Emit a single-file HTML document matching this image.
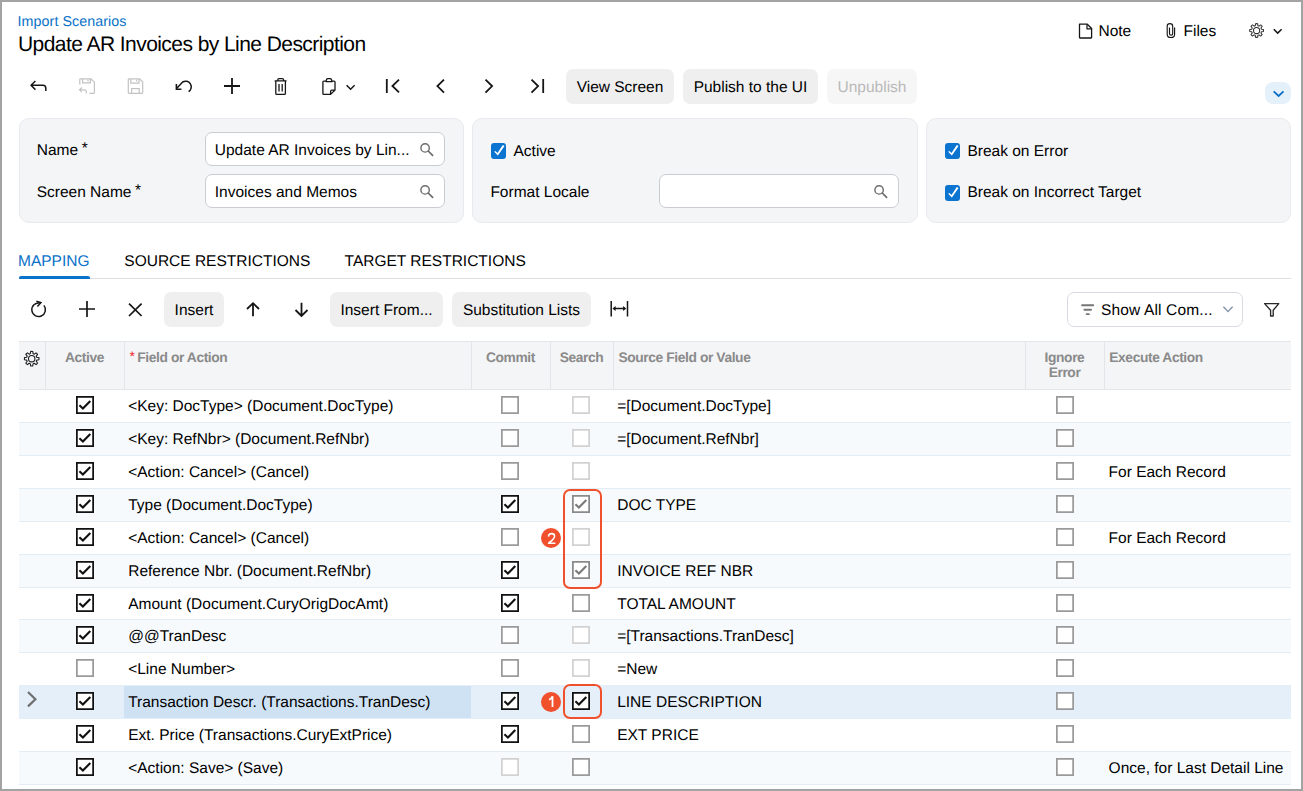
<!DOCTYPE html>
<html><head><meta charset="utf-8"><title>Import Scenarios</title>
<style>
html,body{margin:0;padding:0;width:1303px;height:791px;overflow:hidden;background:#fff}
body{position:relative;font-family:"Liberation Sans", sans-serif}
.t{position:absolute;white-space:pre;font-family:"Liberation Sans", sans-serif;text-rendering:geometricPrecision}
svg{overflow:visible}
#frame{position:absolute;left:0;top:0;width:1303px;height:791px;box-sizing:border-box;border:2px solid #a3a3a3;pointer-events:none}
</style></head><body>
<div class="t" style="left:17.6px;top:14.90px;font-size:14.3px;line-height:14.3px;color:#0a72c8;font-weight:normal;letter-spacing:0.05px;">Import Scenarios</div>
<div class="t" style="left:18px;top:34.02px;font-size:21px;line-height:21px;color:#000;font-weight:normal;letter-spacing:-0.56px;">Update AR Invoices by Line Description</div>
<svg style="position:absolute;left:1070px;top:15px;" width="220" height="30" viewBox="1070 15 220 30" fill="none"><path d="M1079.5,24.2 H1087.3 L1091.6,28.5 V37.5 Q1091.6,38 1091.1,38 H1080 Q1079.5,38 1079.5,37.5 Z" stroke="#161616" stroke-width="1.3" stroke-linejoin="round"/><path d="M1087,24.4 V28.9 H1091.4" stroke="#161616" stroke-width="1.2"/><path d="M1169.5,27.6 V33.5 Q1169.5,35.2 1171.1,35.2 Q1172.7,35.2 1172.7,33.5 V26.3 Q1172.7,23.6 1169.9,23.6 Q1167.2,23.6 1167.2,26.3 V34.2 Q1167.2,37.5 1170.9,37.5 Q1174.6,37.5 1174.6,34.2 V27.6" stroke="#161616" stroke-width="1.15"/><path d="M1273.8,29.2 L1277.7,33.1 L1281.6,29.2" stroke="#161616" stroke-width="1.5"/></svg>
<div class="t" style="left:1098.5px;top:23.98px;font-size:15.5px;line-height:15.5px;color:#000;font-weight:normal;letter-spacing:0.0px;">Note</div>
<div class="t" style="left:1183.5px;top:23.98px;font-size:15.5px;line-height:15.5px;color:#000;font-weight:normal;letter-spacing:0.0px;">Files</div>
<svg style="position:absolute;left:1245px;top:18px;" width="25" height="25" viewBox="1245 18 25 25" fill="none"><path d="M1255.27,25.68 L1255.57,23.68 A6.9,6.9 0 0 1 1257.63,23.68 L1257.93,25.68 A5.0,5.0 0 0 1 1259.06,26.15 L1260.70,24.95 A6.9,6.9 0 0 1 1262.15,26.40 L1260.95,28.04 A5.0,5.0 0 0 1 1261.42,29.17 L1263.42,29.47 A6.9,6.9 0 0 1 1263.42,31.53 L1261.42,31.83 A5.0,5.0 0 0 1 1260.95,32.96 L1262.15,34.60 A6.9,6.9 0 0 1 1260.70,36.05 L1259.06,34.85 A5.0,5.0 0 0 1 1257.93,35.32 L1257.63,37.32 A6.9,6.9 0 0 1 1255.57,37.32 L1255.27,35.32 A5.0,5.0 0 0 1 1254.14,34.85 L1252.50,36.05 A6.9,6.9 0 0 1 1251.05,34.60 L1252.25,32.96 A5.0,5.0 0 0 1 1251.78,31.83 L1249.78,31.53 A6.9,6.9 0 0 1 1249.78,29.47 L1251.78,29.17 A5.0,5.0 0 0 1 1252.25,28.04 L1251.05,26.40 A6.9,6.9 0 0 1 1252.50,24.95 L1254.14,26.15 A5.0,5.0 0 0 1 1255.27,25.68 Z" stroke="#303030" stroke-width="1.05" stroke-linejoin="round"/><circle cx="1256.6" cy="30.5" r="3.1" stroke="#303030" stroke-width="1.05"/></svg>
<svg style="position:absolute;left:20px;top:70px;" width="540" height="32" viewBox="20 70 540 32" fill="none"><path d="M45.8,91 V88.2 Q45.8,85.3 43,85.3 H31.2 M35.4,81 L31,85.3 L35.4,89.6" stroke="#161616" stroke-width="1.5" stroke-linejoin="round"/><path d="M79.8,84.6 V79.6 Q79.8,78.9 80.5,78.9 H91 L94.4,82.3 V92.6 Q94.4,93.3 93.7,93.3 H89.4" stroke="#c3c3c3" stroke-width="1.2"/><path d="M82.6,79 V82.8 H90.4 V79 M88,79.4 V81.4" stroke="#c3c3c3" stroke-width="1.2"/><path d="M86.2,93.6 V91.6 Q86.2,89.8 84.4,89.8 H79.6 M81.8,87.5 L79.5,89.8 L81.8,92.1" stroke="#c3c3c3" stroke-width="1.2"/><path d="M128.3,79.6 Q128.3,78.9 129,78.9 H139.6 L142.7,82 V92.6 Q142.7,93.3 142,93.3 H129 Q128.3,93.3 128.3,92.6 Z" stroke="#c3c3c3" stroke-width="1.2"/><path d="M130.8,79 V83.2 H139 V79 M136.6,79.4 V81.4 M131.6,93.2 V88.6 H139.2 V93.2" stroke="#c3c3c3" stroke-width="1.2"/><path d="M188.6,91.6 A5.6,5.6 0 1 0 182.6,82 L176.6,88.6" stroke="#161616" stroke-width="1.5"/><path d="M176.4,84 V89.2 H181.4" stroke="#161616" stroke-width="1.6"/><path d="M232,78 V94 M224,86 H240" stroke="#161616" stroke-width="1.8"/><path d="M274.6,80.9 H286.6 M277.8,80.9 V79.8 Q277.8,78.6 279,78.6 H282.4 Q283.6,78.6 283.6,79.8 V80.9 M275.8,81 V93.4 Q275.8,94.4 276.8,94.4 H284.4 Q285.4,94.4 285.4,93.4 V81 M279,84 V91.5 M282.2,84 V91.5" stroke="#161616" stroke-width="1.3"/><path d="M326,81.1 H323.8 Q322.9,81.1 322.9,82 V93.5 Q322.9,94.4 323.8,94.4 H330.6 L335,90 V82 Q335,81.1 334.1,81.1 H332 M326,81.6 L326.6,79.4 Q326.9,78.6 327.8,78.6 H330.2 Q331.1,78.6 331.4,79.4 L332,81.6 Z M330.6,94.2 V91.4 Q330.6,90.2 331.8,90.2 H334.8" stroke="#161616" stroke-width="1.3" stroke-linejoin="round"/><path d="M346.6,85.2 L350.6,89.2 L354.6,85.2" stroke="#161616" stroke-width="1.5"/><path d="M386.8,79 V93 M399,79.6 L392.4,86 L399,92.4" stroke="#161616" stroke-width="1.8"/><path d="M444,79.6 L437.4,86.1 L444,92.6" stroke="#161616" stroke-width="1.8"/><path d="M485.5,79.6 L492.1,86.1 L485.5,92.6" stroke="#161616" stroke-width="1.8"/><path d="M531.5,79.6 L538.1,86.1 L531.5,92.6 M543.2,79 V93" stroke="#161616" stroke-width="1.8"/></svg>
<div style="position:absolute;left:566px;top:69px;width:108px;height:35px;background:#efefef;border-radius:7px"></div><div class="t" style="left:566px;top:69px;width:108px;height:35px;line-height:37px;text-align:center;font-size:15.5px;color:#000;letter-spacing:0px">View Screen</div>
<div style="position:absolute;left:683px;top:69px;width:135px;height:35px;background:#efefef;border-radius:7px"></div><div class="t" style="left:683px;top:69px;width:135px;height:35px;line-height:37px;text-align:center;font-size:15.5px;color:#000;letter-spacing:0px">Publish to the UI</div>
<div style="position:absolute;left:827px;top:69px;width:90px;height:35px;background:#f6f6f6;border-radius:7px"></div><div class="t" style="left:827px;top:69px;width:90px;height:35px;line-height:37px;text-align:center;font-size:15.5px;color:#b9b9b9;letter-spacing:0px">Unpublish</div>
<div style="position:absolute;left:1265px;top:82px;width:26px;height:22px;background:#e4f0fa;border-radius:8px"></div>
<svg style="position:absolute;left:1270px;top:86px;" width="16" height="14" viewBox="1270 86 16 14" fill="none"><path d="M1273.7,91.4 L1278.6,96 L1283.5,91.4" stroke="#0a6fc6" stroke-width="1.8"/></svg>
<div style="position:absolute;left:19px;top:118px;width:445px;height:105px;background:#f4f5f7;border:1px solid #e9eaed;border-radius:10px;box-sizing:border-box"></div>
<div style="position:absolute;left:472px;top:118px;width:446px;height:105px;background:#f4f5f7;border:1px solid #e9eaed;border-radius:10px;box-sizing:border-box"></div>
<div style="position:absolute;left:926px;top:118px;width:365px;height:105px;background:#f4f5f7;border:1px solid #e9eaed;border-radius:10px;box-sizing:border-box"></div>
<div class="t" style="left:36.7px;top:142.88px;font-size:15.5px;line-height:15.5px;color:#000;font-weight:normal;letter-spacing:0.0px;">Name</div>
<div class="t" style="left:81.8px;top:141.38px;font-size:15.5px;line-height:15.5px;color:#000;font-weight:normal;letter-spacing:0.0px;">*</div>
<div class="t" style="left:36.7px;top:184.88px;font-size:15.5px;line-height:15.5px;color:#000;font-weight:normal;letter-spacing:0.0px;">Screen Name</div>
<div class="t" style="left:135.1px;top:183.38px;font-size:15.5px;line-height:15.5px;color:#000;font-weight:normal;letter-spacing:0.0px;">*</div>
<div style="position:absolute;left:205px;top:132px;width:240px;height:34px;background:#fff;border:1px solid #c9ccd1;border-radius:7px;box-sizing:border-box"></div><div class="t" style="left:214.8px;top:142.88px;font-size:15.5px;line-height:15.5px;color:#000;font-weight:normal;letter-spacing:0.0px;">Update AR Invoices by Lin...</div><svg style="position:absolute;left:417px;top:138px;" width="22" height="22" viewBox="417 138 22 22" fill="none"><circle cx="425.09999999999997" cy="147.9" r="4.2" stroke="#6b6b6b" stroke-width="1.4"/><path d="M428.2,151.0 L432.59999999999997,155.4" stroke="#6b6b6b" stroke-width="1.7" stroke-linecap="round"/></svg>
<div style="position:absolute;left:205px;top:174px;width:240px;height:34px;background:#fff;border:1px solid #c9ccd1;border-radius:7px;box-sizing:border-box"></div><div class="t" style="left:214.8px;top:184.88px;font-size:15.5px;line-height:15.5px;color:#000;font-weight:normal;letter-spacing:0.0px;">Invoices and Memos</div><svg style="position:absolute;left:417px;top:180px;" width="22" height="22" viewBox="417 180 22 22" fill="none"><circle cx="425.09999999999997" cy="189.9" r="4.2" stroke="#6b6b6b" stroke-width="1.4"/><path d="M428.2,193.0 L432.59999999999997,197.4" stroke="#6b6b6b" stroke-width="1.7" stroke-linecap="round"/></svg>
<div style="position:absolute;left:491px;top:143px;width:15px;height:16px;background:#0b74d1;border-radius:3px"></div><svg style="position:absolute;left:491px;top:143px;" width="15" height="16" viewBox="491 143 15 16" fill="none"><path d="M494.2,151.7 L495.3,150.9 L497.5,153.1 L502.8,145.1 L504.5,146.1 L497.9,155.6 Z" fill="#fff"/></svg>
<div class="t" style="left:513.5px;top:143.68px;font-size:15.5px;line-height:15.5px;color:#000;font-weight:normal;letter-spacing:0.0px;">Active</div>
<div class="t" style="left:490.4px;top:184.68px;font-size:15.5px;line-height:15.5px;color:#000;font-weight:normal;letter-spacing:0.0px;">Format Locale</div>
<div style="position:absolute;left:659px;top:174px;width:240px;height:34px;background:#fff;border:1px solid #c9ccd1;border-radius:7px;box-sizing:border-box"></div><svg style="position:absolute;left:871px;top:180px;" width="22" height="22" viewBox="871 180 22 22" fill="none"><circle cx="879.1" cy="189.9" r="4.2" stroke="#6b6b6b" stroke-width="1.4"/><path d="M882.2,193.0 L886.6,197.4" stroke="#6b6b6b" stroke-width="1.7" stroke-linecap="round"/></svg>
<div style="position:absolute;left:945px;top:143px;width:15px;height:16px;background:#0b74d1;border-radius:3px"></div><svg style="position:absolute;left:945px;top:143px;" width="15" height="16" viewBox="945 143 15 16" fill="none"><path d="M948.2,151.7 L949.3,150.9 L951.5,153.1 L956.8,145.1 L958.5,146.1 L951.9,155.6 Z" fill="#fff"/></svg>
<div class="t" style="left:967.4px;top:143.68px;font-size:15.5px;line-height:15.5px;color:#000;font-weight:normal;letter-spacing:0.0px;">Break on Error</div>
<div style="position:absolute;left:945px;top:185px;width:15px;height:16px;background:#0b74d1;border-radius:3px"></div><svg style="position:absolute;left:945px;top:185px;" width="15" height="16" viewBox="945 185 15 16" fill="none"><path d="M948.2,193.7 L949.3,192.9 L951.5,195.1 L956.8,187.1 L958.5,188.1 L951.9,197.6 Z" fill="#fff"/></svg>
<div class="t" style="left:967.4px;top:185.48px;font-size:15.5px;line-height:15.5px;color:#000;font-weight:normal;letter-spacing:0.0px;">Break on Incorrect Target</div>
<div style="position:absolute;left:19px;top:278px;width:1272px;height:1px;background:#dedfe2"></div>
<div class="t" style="left:18px;top:253.88px;font-size:15.5px;line-height:15.5px;color:#0a72c8;font-weight:normal;letter-spacing:0.0px;">MAPPING</div>
<div style="position:absolute;left:19px;top:276px;width:71px;height:3px;background:#0a72c8;border-radius:2px 2px 0 0"></div>
<div class="t" style="left:124.3px;top:253.88px;font-size:15.5px;line-height:15.5px;color:#000;font-weight:normal;letter-spacing:0.0px;">SOURCE RESTRICTIONS</div>
<div class="t" style="left:344.6px;top:253.88px;font-size:15.5px;line-height:15.5px;color:#000;font-weight:normal;letter-spacing:0.0px;">TARGET RESTRICTIONS</div>
<svg style="position:absolute;left:20px;top:295px;" width="620" height="28" viewBox="20 295 620 28" fill="none"><path d="M43.9,305.4 A6.8,6.8 0 1 1 39.8,303" stroke="#161616" stroke-width="1.5"/><path d="M36.4,301.3 L40.9,302.7 L37.4,306.5" stroke="#161616" stroke-width="1.5" stroke-linejoin="miter"/><path d="M87,301 V317 M79,309 H95" stroke="#161616" stroke-width="1.7"/><path d="M129,303.6 L141.6,316 M141.6,303.6 L129,316" stroke="#161616" stroke-width="1.7"/><path d="M253,303.4 V316.2 M247,309 L253,303.2 L259,309" stroke="#161616" stroke-width="1.8"/><path d="M301.5,302.8 V315.8 M295.5,310 L301.5,316 L307.5,310" stroke="#161616" stroke-width="1.8"/><path d="M611.2,301 V316.6 M627.5,301 V316.6 M614,308.5 H624.6" stroke="#161616" stroke-width="1.5"/><path d="M612.4,308.5 L615.6,305.9 V311.1 Z M626.3,308.5 L623.1,305.9 V311.1 Z" fill="#161616"/></svg>
<div style="position:absolute;left:164px;top:292px;width:60px;height:35px;background:#efefef;border-radius:7px"></div><div class="t" style="left:164px;top:292px;width:60px;height:35px;line-height:37px;text-align:center;font-size:15.5px;color:#000;letter-spacing:0px">Insert</div>
<div style="position:absolute;left:330px;top:292px;width:113px;height:35px;background:#efefef;border-radius:7px"></div><div class="t" style="left:330px;top:292px;width:113px;height:35px;line-height:37px;text-align:center;font-size:15.5px;color:#000;letter-spacing:0px">Insert From...</div>
<div style="position:absolute;left:452px;top:292px;width:139px;height:35px;background:#efefef;border-radius:7px"></div><div class="t" style="left:452px;top:292px;width:139px;height:35px;line-height:37px;text-align:center;font-size:15.5px;color:#000;letter-spacing:0px">Substitution Lists</div>
<div style="position:absolute;left:1067px;top:292px;width:176px;height:35px;background:#fff;border:1px solid #d8dce2;border-radius:7px;box-sizing:border-box"></div>
<svg style="position:absolute;left:1075px;top:300px;" width="25" height="20" viewBox="1075 300 25 20" fill="none"><path d="M1082.1,305.2 H1093.2 M1084.4,309.8 H1091 M1086.7,314.1 H1088.9" stroke="#767676" stroke-width="1.9" stroke-linecap="round"/></svg>
<div class="t" style="left:1101px;top:302.68px;font-size:15.5px;line-height:15.5px;color:#000;font-weight:normal;letter-spacing:0.15px;">Show All Com...</div>
<svg style="position:absolute;left:1220px;top:302px;" width="16" height="14" viewBox="1220 302 16 14" fill="none"><path d="M1223.4,306.8 L1228,311.6 L1232.6,306.8" stroke="#7c8ea5" stroke-width="1.3"/></svg>
<svg style="position:absolute;left:1260px;top:300px;" width="24" height="20" viewBox="1260 300 24 20" fill="none"><path d="M1264.6,303.6 H1278.8 L1273.2,310.2 V316 H1270.6 V310.2 Z" stroke="#2a2a2a" stroke-width="1.35" stroke-linejoin="round"/></svg>
<div style="position:absolute;left:19px;top:341px;width:1272px;height:49px;background:#f4f5f7;border-top:1px solid #e3e5e8;border-bottom:1px solid #e3e5e8;box-sizing:border-box"></div>
<div style="position:absolute;left:45px;top:341px;width:1px;height:49px;background:#e3e5e8"></div>
<div style="position:absolute;left:124px;top:341px;width:1px;height:49px;background:#e3e5e8"></div>
<div style="position:absolute;left:471px;top:341px;width:1px;height:49px;background:#e3e5e8"></div>
<div style="position:absolute;left:550px;top:341px;width:1px;height:49px;background:#e3e5e8"></div>
<div style="position:absolute;left:613px;top:341px;width:1px;height:49px;background:#e3e5e8"></div>
<div style="position:absolute;left:1025px;top:341px;width:1px;height:49px;background:#e3e5e8"></div>
<div style="position:absolute;left:1104px;top:341px;width:1px;height:49px;background:#e3e5e8"></div>
<svg style="position:absolute;left:21px;top:349px;" width="22" height="20" viewBox="21 349 22 20" fill="none"><path d="M30.31,353.69 L30.61,351.48 A7.3,7.3 0 0 1 32.79,351.48 L33.09,353.69 A5.2,5.2 0 0 1 34.26,354.18 L36.03,352.82 A7.3,7.3 0 0 1 37.58,354.37 L36.22,356.14 A5.2,5.2 0 0 1 36.71,357.31 L38.92,357.61 A7.3,7.3 0 0 1 38.92,359.79 L36.71,360.09 A5.2,5.2 0 0 1 36.22,361.26 L37.58,363.03 A7.3,7.3 0 0 1 36.03,364.58 L34.26,363.22 A5.2,5.2 0 0 1 33.09,363.71 L32.79,365.92 A7.3,7.3 0 0 1 30.61,365.92 L30.31,363.71 A5.2,5.2 0 0 1 29.14,363.22 L27.37,364.58 A7.3,7.3 0 0 1 25.82,363.03 L27.18,361.26 A5.2,5.2 0 0 1 26.69,360.09 L24.48,359.79 A7.3,7.3 0 0 1 24.48,357.61 L26.69,357.31 A5.2,5.2 0 0 1 27.18,356.14 L25.82,354.37 A7.3,7.3 0 0 1 27.37,352.82 L29.14,354.18 A5.2,5.2 0 0 1 30.31,353.69 Z" stroke="#1e1e1e" stroke-width="1.1" stroke-linejoin="round"/><circle cx="31.7" cy="358.7" r="3.2" stroke="#1e1e1e" stroke-width="1.1"/></svg>
<div class="t" style="left:45px;width:79px;text-align:center;top:350.52px;font-size:13.8px;line-height:13.8px;color:#8a8a8a;font-weight:bold;letter-spacing:-0.4px">Active</div>
<div class="t" style="left:129.4px;top:348.95px;font-size:14px;line-height:14px;color:#f01818;font-weight:normal;letter-spacing:0px;">*</div>
<div class="t" style="left:137.3px;top:350.52px;font-size:13.8px;line-height:13.8px;color:#8a8a8a;font-weight:bold;letter-spacing:-0.4px;">Field or Action</div>
<div class="t" style="left:471px;width:79px;text-align:center;top:350.52px;font-size:13.8px;line-height:13.8px;color:#8a8a8a;font-weight:bold;letter-spacing:-0.4px">Commit</div>
<div class="t" style="left:550px;width:63px;text-align:center;top:350.52px;font-size:13.8px;line-height:13.8px;color:#8a8a8a;font-weight:bold;letter-spacing:-0.4px">Search</div>
<div class="t" style="left:618.5px;top:350.52px;font-size:13.8px;line-height:13.8px;color:#8a8a8a;font-weight:bold;letter-spacing:-0.4px;">Source Field or Value</div>
<div class="t" style="left:1025px;width:79px;text-align:center;top:350.72px;font-size:13.8px;line-height:13.8px;color:#8a8a8a;font-weight:bold;letter-spacing:-0.4px">Ignore</div>
<div class="t" style="left:1025px;width:79px;text-align:center;top:366.12px;font-size:13.8px;line-height:13.8px;color:#8a8a8a;font-weight:bold;letter-spacing:-0.4px">Error</div>
<div class="t" style="left:1109.3px;top:350.52px;font-size:13.8px;line-height:13.8px;color:#8a8a8a;font-weight:bold;letter-spacing:-0.4px;">Execute Action</div>
<div style="position:absolute;left:19px;top:422px;width:1272px;height:1px;background:#e3edf6"></div>
<svg style="position:absolute;left:76px;top:396px;" width="18" height="18" viewBox="76 396 18 18" fill="none"><rect x="76.875" y="396.875" width="16.25" height="16.25" fill="#fff" stroke="#111" stroke-width="1.75"/><path d="M79.4,405.3 L82.9,408.5 L90.3,401" stroke="#111" stroke-width="2.1"/></svg>
<svg style="position:absolute;left:501px;top:396px;" width="18" height="18" viewBox="501 396 18 18" fill="none"><rect x="501.875" y="396.875" width="16.25" height="16.25" fill="#fff" stroke="#9a9a9a" stroke-width="1.75"/></svg>
<svg style="position:absolute;left:572px;top:396px;" width="18" height="18" viewBox="572 396 18 18" fill="none"><rect x="572.875" y="396.875" width="16.25" height="16.25" fill="#fff" stroke="#d2d2d2" stroke-width="1.75"/></svg>
<svg style="position:absolute;left:1056px;top:396px;" width="18" height="18" viewBox="1056 396 18 18" fill="none"><rect x="1056.875" y="396.875" width="16.25" height="16.25" fill="#fff" stroke="#9a9a9a" stroke-width="1.75"/></svg>
<div class="t" style="left:128.2px;top:398.88px;font-size:15.5px;line-height:15.5px;color:#000;font-weight:normal;letter-spacing:0.0px;">&lt;Key: DocType&gt; (Document.DocType)</div>
<div class="t" style="left:617.2px;top:398.88px;font-size:15.5px;line-height:15.5px;color:#000;font-weight:normal;letter-spacing:0.0px;">=[Document.DocType]</div>
<div style="position:absolute;left:19px;top:423px;width:1272px;height:32px;background:#f7fafd"></div>
<div style="position:absolute;left:19px;top:455px;width:1272px;height:1px;background:#e3edf6"></div>
<svg style="position:absolute;left:76px;top:429px;" width="18" height="18" viewBox="76 429 18 18" fill="none"><rect x="76.875" y="429.875" width="16.25" height="16.25" fill="#fff" stroke="#111" stroke-width="1.75"/><path d="M79.4,438.3 L82.9,441.5 L90.3,434" stroke="#111" stroke-width="2.1"/></svg>
<svg style="position:absolute;left:501px;top:429px;" width="18" height="18" viewBox="501 429 18 18" fill="none"><rect x="501.875" y="429.875" width="16.25" height="16.25" fill="#fff" stroke="#9a9a9a" stroke-width="1.75"/></svg>
<svg style="position:absolute;left:572px;top:429px;" width="18" height="18" viewBox="572 429 18 18" fill="none"><rect x="572.875" y="429.875" width="16.25" height="16.25" fill="#fff" stroke="#d2d2d2" stroke-width="1.75"/></svg>
<svg style="position:absolute;left:1056px;top:429px;" width="18" height="18" viewBox="1056 429 18 18" fill="none"><rect x="1056.875" y="429.875" width="16.25" height="16.25" fill="#fff" stroke="#9a9a9a" stroke-width="1.75"/></svg>
<div class="t" style="left:128.2px;top:431.88px;font-size:15.5px;line-height:15.5px;color:#000;font-weight:normal;letter-spacing:0.0px;">&lt;Key: RefNbr&gt; (Document.RefNbr)</div>
<div class="t" style="left:617.2px;top:431.88px;font-size:15.5px;line-height:15.5px;color:#000;font-weight:normal;letter-spacing:0.0px;">=[Document.RefNbr]</div>
<div style="position:absolute;left:19px;top:488px;width:1272px;height:1px;background:#e3edf6"></div>
<svg style="position:absolute;left:76px;top:462px;" width="18" height="18" viewBox="76 462 18 18" fill="none"><rect x="76.875" y="462.875" width="16.25" height="16.25" fill="#fff" stroke="#111" stroke-width="1.75"/><path d="M79.4,471.3 L82.9,474.5 L90.3,467" stroke="#111" stroke-width="2.1"/></svg>
<svg style="position:absolute;left:501px;top:462px;" width="18" height="18" viewBox="501 462 18 18" fill="none"><rect x="501.875" y="462.875" width="16.25" height="16.25" fill="#fff" stroke="#9a9a9a" stroke-width="1.75"/></svg>
<svg style="position:absolute;left:572px;top:462px;" width="18" height="18" viewBox="572 462 18 18" fill="none"><rect x="572.875" y="462.875" width="16.25" height="16.25" fill="#fff" stroke="#d2d2d2" stroke-width="1.75"/></svg>
<svg style="position:absolute;left:1056px;top:462px;" width="18" height="18" viewBox="1056 462 18 18" fill="none"><rect x="1056.875" y="462.875" width="16.25" height="16.25" fill="#fff" stroke="#9a9a9a" stroke-width="1.75"/></svg>
<div class="t" style="left:128.2px;top:464.88px;font-size:15.5px;line-height:15.5px;color:#000;font-weight:normal;letter-spacing:0.0px;">&lt;Action: Cancel&gt; (Cancel)</div>
<div class="t" style="left:1108.6px;top:464.88px;font-size:15.5px;line-height:15.5px;color:#000;font-weight:normal;letter-spacing:0.0px;">For Each Record</div>
<div style="position:absolute;left:19px;top:489px;width:1272px;height:32px;background:#f7fafd"></div>
<div style="position:absolute;left:19px;top:521px;width:1272px;height:1px;background:#e3edf6"></div>
<svg style="position:absolute;left:76px;top:495px;" width="18" height="18" viewBox="76 495 18 18" fill="none"><rect x="76.875" y="495.875" width="16.25" height="16.25" fill="#fff" stroke="#111" stroke-width="1.75"/><path d="M79.4,504.3 L82.9,507.5 L90.3,500" stroke="#111" stroke-width="2.1"/></svg>
<svg style="position:absolute;left:501px;top:495px;" width="18" height="18" viewBox="501 495 18 18" fill="none"><rect x="501.875" y="495.875" width="16.25" height="16.25" fill="#fff" stroke="#111" stroke-width="1.75"/><path d="M504.4,504.3 L507.9,507.5 L515.3,500" stroke="#111" stroke-width="2.1"/></svg>
<svg style="position:absolute;left:572px;top:495px;" width="18" height="18" viewBox="572 495 18 18" fill="none"><rect x="572.875" y="495.875" width="16.25" height="16.25" fill="#fff" stroke="#8a8a8a" stroke-width="1.75"/><path d="M575.4,504.3 L578.9,507.5 L586.3,500" stroke="#7a7a7a" stroke-width="2.1"/></svg>
<svg style="position:absolute;left:1056px;top:495px;" width="18" height="18" viewBox="1056 495 18 18" fill="none"><rect x="1056.875" y="495.875" width="16.25" height="16.25" fill="#fff" stroke="#9a9a9a" stroke-width="1.75"/></svg>
<div class="t" style="left:128.2px;top:497.88px;font-size:15.5px;line-height:15.5px;color:#000;font-weight:normal;letter-spacing:0.0px;">Type (Document.DocType)</div>
<div class="t" style="left:617.2px;top:497.88px;font-size:15.5px;line-height:15.5px;color:#000;font-weight:normal;letter-spacing:0.0px;">DOC TYPE</div>
<div style="position:absolute;left:19px;top:554px;width:1272px;height:1px;background:#e3edf6"></div>
<svg style="position:absolute;left:76px;top:528px;" width="18" height="18" viewBox="76 528 18 18" fill="none"><rect x="76.875" y="528.875" width="16.25" height="16.25" fill="#fff" stroke="#111" stroke-width="1.75"/><path d="M79.4,537.3 L82.9,540.5 L90.3,533" stroke="#111" stroke-width="2.1"/></svg>
<svg style="position:absolute;left:501px;top:528px;" width="18" height="18" viewBox="501 528 18 18" fill="none"><rect x="501.875" y="528.875" width="16.25" height="16.25" fill="#fff" stroke="#9a9a9a" stroke-width="1.75"/></svg>
<svg style="position:absolute;left:572px;top:528px;" width="18" height="18" viewBox="572 528 18 18" fill="none"><rect x="572.875" y="528.875" width="16.25" height="16.25" fill="#fff" stroke="#d2d2d2" stroke-width="1.75"/></svg>
<svg style="position:absolute;left:1056px;top:528px;" width="18" height="18" viewBox="1056 528 18 18" fill="none"><rect x="1056.875" y="528.875" width="16.25" height="16.25" fill="#fff" stroke="#9a9a9a" stroke-width="1.75"/></svg>
<div class="t" style="left:128.2px;top:530.88px;font-size:15.5px;line-height:15.5px;color:#000;font-weight:normal;letter-spacing:0.0px;">&lt;Action: Cancel&gt; (Cancel)</div>
<div class="t" style="left:1108.6px;top:530.88px;font-size:15.5px;line-height:15.5px;color:#000;font-weight:normal;letter-spacing:0.0px;">For Each Record</div>
<div style="position:absolute;left:19px;top:555px;width:1272px;height:32px;background:#f7fafd"></div>
<div style="position:absolute;left:19px;top:587px;width:1272px;height:1px;background:#e3edf6"></div>
<svg style="position:absolute;left:76px;top:561px;" width="18" height="18" viewBox="76 561 18 18" fill="none"><rect x="76.875" y="561.875" width="16.25" height="16.25" fill="#fff" stroke="#111" stroke-width="1.75"/><path d="M79.4,570.3 L82.9,573.5 L90.3,566" stroke="#111" stroke-width="2.1"/></svg>
<svg style="position:absolute;left:501px;top:561px;" width="18" height="18" viewBox="501 561 18 18" fill="none"><rect x="501.875" y="561.875" width="16.25" height="16.25" fill="#fff" stroke="#111" stroke-width="1.75"/><path d="M504.4,570.3 L507.9,573.5 L515.3,566" stroke="#111" stroke-width="2.1"/></svg>
<svg style="position:absolute;left:572px;top:561px;" width="18" height="18" viewBox="572 561 18 18" fill="none"><rect x="572.875" y="561.875" width="16.25" height="16.25" fill="#fff" stroke="#8a8a8a" stroke-width="1.75"/><path d="M575.4,570.3 L578.9,573.5 L586.3,566" stroke="#7a7a7a" stroke-width="2.1"/></svg>
<svg style="position:absolute;left:1056px;top:561px;" width="18" height="18" viewBox="1056 561 18 18" fill="none"><rect x="1056.875" y="561.875" width="16.25" height="16.25" fill="#fff" stroke="#9a9a9a" stroke-width="1.75"/></svg>
<div class="t" style="left:128.2px;top:563.88px;font-size:15.5px;line-height:15.5px;color:#000;font-weight:normal;letter-spacing:0.0px;">Reference Nbr. (Document.RefNbr)</div>
<div class="t" style="left:617.2px;top:563.88px;font-size:15.5px;line-height:15.5px;color:#000;font-weight:normal;letter-spacing:0.0px;">INVOICE REF NBR</div>
<div style="position:absolute;left:19px;top:619px;width:1272px;height:1px;background:#e3edf6"></div>
<svg style="position:absolute;left:76px;top:594px;" width="18" height="18" viewBox="76 594 18 18" fill="none"><rect x="76.875" y="594.875" width="16.25" height="16.25" fill="#fff" stroke="#111" stroke-width="1.75"/><path d="M79.4,603.3 L82.9,606.5 L90.3,599" stroke="#111" stroke-width="2.1"/></svg>
<svg style="position:absolute;left:501px;top:594px;" width="18" height="18" viewBox="501 594 18 18" fill="none"><rect x="501.875" y="594.875" width="16.25" height="16.25" fill="#fff" stroke="#111" stroke-width="1.75"/><path d="M504.4,603.3 L507.9,606.5 L515.3,599" stroke="#111" stroke-width="2.1"/></svg>
<svg style="position:absolute;left:572px;top:594px;" width="18" height="18" viewBox="572 594 18 18" fill="none"><rect x="572.875" y="594.875" width="16.25" height="16.25" fill="#fff" stroke="#9a9a9a" stroke-width="1.75"/></svg>
<svg style="position:absolute;left:1056px;top:594px;" width="18" height="18" viewBox="1056 594 18 18" fill="none"><rect x="1056.875" y="594.875" width="16.25" height="16.25" fill="#fff" stroke="#9a9a9a" stroke-width="1.75"/></svg>
<div class="t" style="left:128.2px;top:596.88px;font-size:15.5px;line-height:15.5px;color:#000;font-weight:normal;letter-spacing:0.0px;">Amount (Document.CuryOrigDocAmt)</div>
<div class="t" style="left:617.2px;top:596.88px;font-size:15.5px;line-height:15.5px;color:#000;font-weight:normal;letter-spacing:0.0px;">TOTAL AMOUNT</div>
<div style="position:absolute;left:19px;top:620px;width:1272px;height:32px;background:#f7fafd"></div>
<div style="position:absolute;left:19px;top:652px;width:1272px;height:1px;background:#e3edf6"></div>
<svg style="position:absolute;left:76px;top:626px;" width="18" height="18" viewBox="76 626 18 18" fill="none"><rect x="76.875" y="626.875" width="16.25" height="16.25" fill="#fff" stroke="#111" stroke-width="1.75"/><path d="M79.4,635.3 L82.9,638.5 L90.3,631" stroke="#111" stroke-width="2.1"/></svg>
<svg style="position:absolute;left:501px;top:626px;" width="18" height="18" viewBox="501 626 18 18" fill="none"><rect x="501.875" y="626.875" width="16.25" height="16.25" fill="#fff" stroke="#9a9a9a" stroke-width="1.75"/></svg>
<svg style="position:absolute;left:572px;top:626px;" width="18" height="18" viewBox="572 626 18 18" fill="none"><rect x="572.875" y="626.875" width="16.25" height="16.25" fill="#fff" stroke="#d2d2d2" stroke-width="1.75"/></svg>
<svg style="position:absolute;left:1056px;top:626px;" width="18" height="18" viewBox="1056 626 18 18" fill="none"><rect x="1056.875" y="626.875" width="16.25" height="16.25" fill="#fff" stroke="#9a9a9a" stroke-width="1.75"/></svg>
<div class="t" style="left:128.2px;top:628.88px;font-size:15.5px;line-height:15.5px;color:#000;font-weight:normal;letter-spacing:0.0px;">@@TranDesc</div>
<div class="t" style="left:617.2px;top:628.88px;font-size:15.5px;line-height:15.5px;color:#000;font-weight:normal;letter-spacing:0.0px;">=[Transactions.TranDesc]</div>
<svg style="position:absolute;left:76px;top:659px;" width="18" height="18" viewBox="76 659 18 18" fill="none"><rect x="76.875" y="659.875" width="16.25" height="16.25" fill="#fff" stroke="#9a9a9a" stroke-width="1.75"/></svg>
<svg style="position:absolute;left:501px;top:659px;" width="18" height="18" viewBox="501 659 18 18" fill="none"><rect x="501.875" y="659.875" width="16.25" height="16.25" fill="#fff" stroke="#9a9a9a" stroke-width="1.75"/></svg>
<svg style="position:absolute;left:572px;top:659px;" width="18" height="18" viewBox="572 659 18 18" fill="none"><rect x="572.875" y="659.875" width="16.25" height="16.25" fill="#fff" stroke="#d2d2d2" stroke-width="1.75"/></svg>
<svg style="position:absolute;left:1056px;top:659px;" width="18" height="18" viewBox="1056 659 18 18" fill="none"><rect x="1056.875" y="659.875" width="16.25" height="16.25" fill="#fff" stroke="#9a9a9a" stroke-width="1.75"/></svg>
<div class="t" style="left:128.2px;top:661.88px;font-size:15.5px;line-height:15.5px;color:#000;font-weight:normal;letter-spacing:0.0px;">&lt;Line Number&gt;</div>
<div class="t" style="left:617.2px;top:661.88px;font-size:15.5px;line-height:15.5px;color:#000;font-weight:normal;letter-spacing:0.0px;">=New</div>
<div style="position:absolute;left:19px;top:685px;width:1272px;height:34px;background:#e4eff9"></div>
<div style="position:absolute;left:124px;top:686px;width:347px;height:32px;background:#cfe2f3"></div>
<svg style="position:absolute;left:76px;top:692px;" width="18" height="18" viewBox="76 692 18 18" fill="none"><rect x="76.875" y="692.875" width="16.25" height="16.25" fill="#fff" stroke="#111" stroke-width="1.75"/><path d="M79.4,701.3 L82.9,704.5 L90.3,697" stroke="#111" stroke-width="2.1"/></svg>
<svg style="position:absolute;left:501px;top:692px;" width="18" height="18" viewBox="501 692 18 18" fill="none"><rect x="501.875" y="692.875" width="16.25" height="16.25" fill="#fff" stroke="#111" stroke-width="1.75"/><path d="M504.4,701.3 L507.9,704.5 L515.3,697" stroke="#111" stroke-width="2.1"/></svg>
<svg style="position:absolute;left:572px;top:692px;" width="18" height="18" viewBox="572 692 18 18" fill="none"><rect x="572.875" y="692.875" width="16.25" height="16.25" fill="#fff" stroke="#111" stroke-width="1.75"/><path d="M575.4,701.3 L578.9,704.5 L586.3,697" stroke="#111" stroke-width="2.1"/></svg>
<svg style="position:absolute;left:1056px;top:692px;" width="18" height="18" viewBox="1056 692 18 18" fill="none"><rect x="1056.875" y="692.875" width="16.25" height="16.25" fill="#fff" stroke="#9a9a9a" stroke-width="1.75"/></svg>
<div class="t" style="left:128.2px;top:694.88px;font-size:15.5px;line-height:15.5px;color:#000;font-weight:normal;letter-spacing:0.0px;">Transaction Descr. (Transactions.TranDesc)</div>
<div class="t" style="left:617.2px;top:694.88px;font-size:15.5px;line-height:15.5px;color:#000;font-weight:normal;letter-spacing:0.0px;">LINE DESCRIPTION</div>
<svg style="position:absolute;left:24px;top:688px;" width="18" height="25" viewBox="24 688 18 25" fill="none"><path d="M28,692 L35.4,699.2 L28,706.4" stroke="#6f6f6f" stroke-width="2.2"/></svg>
<div style="position:absolute;left:19px;top:751px;width:1272px;height:1px;background:#e3edf6"></div>
<svg style="position:absolute;left:76px;top:725px;" width="18" height="18" viewBox="76 725 18 18" fill="none"><rect x="76.875" y="725.875" width="16.25" height="16.25" fill="#fff" stroke="#111" stroke-width="1.75"/><path d="M79.4,734.3 L82.9,737.5 L90.3,730" stroke="#111" stroke-width="2.1"/></svg>
<svg style="position:absolute;left:501px;top:725px;" width="18" height="18" viewBox="501 725 18 18" fill="none"><rect x="501.875" y="725.875" width="16.25" height="16.25" fill="#fff" stroke="#111" stroke-width="1.75"/><path d="M504.4,734.3 L507.9,737.5 L515.3,730" stroke="#111" stroke-width="2.1"/></svg>
<svg style="position:absolute;left:572px;top:725px;" width="18" height="18" viewBox="572 725 18 18" fill="none"><rect x="572.875" y="725.875" width="16.25" height="16.25" fill="#fff" stroke="#9a9a9a" stroke-width="1.75"/></svg>
<svg style="position:absolute;left:1056px;top:725px;" width="18" height="18" viewBox="1056 725 18 18" fill="none"><rect x="1056.875" y="725.875" width="16.25" height="16.25" fill="#fff" stroke="#9a9a9a" stroke-width="1.75"/></svg>
<div class="t" style="left:128.2px;top:727.88px;font-size:15.5px;line-height:15.5px;color:#000;font-weight:normal;letter-spacing:0.0px;">Ext. Price (Transactions.CuryExtPrice)</div>
<div class="t" style="left:617.2px;top:727.88px;font-size:15.5px;line-height:15.5px;color:#000;font-weight:normal;letter-spacing:0.0px;">EXT PRICE</div>
<div style="position:absolute;left:19px;top:752px;width:1272px;height:32px;background:#f7fafd"></div>
<div style="position:absolute;left:19px;top:784px;width:1272px;height:1px;background:#e3edf6"></div>
<svg style="position:absolute;left:76px;top:758px;" width="18" height="18" viewBox="76 758 18 18" fill="none"><rect x="76.875" y="758.875" width="16.25" height="16.25" fill="#fff" stroke="#111" stroke-width="1.75"/><path d="M79.4,767.3 L82.9,770.5 L90.3,763" stroke="#111" stroke-width="2.1"/></svg>
<svg style="position:absolute;left:501px;top:758px;" width="18" height="18" viewBox="501 758 18 18" fill="none"><rect x="501.875" y="758.875" width="16.25" height="16.25" fill="#fff" stroke="#d2d2d2" stroke-width="1.75"/></svg>
<svg style="position:absolute;left:572px;top:758px;" width="18" height="18" viewBox="572 758 18 18" fill="none"><rect x="572.875" y="758.875" width="16.25" height="16.25" fill="#fff" stroke="#9a9a9a" stroke-width="1.75"/></svg>
<svg style="position:absolute;left:1056px;top:758px;" width="18" height="18" viewBox="1056 758 18 18" fill="none"><rect x="1056.875" y="758.875" width="16.25" height="16.25" fill="#fff" stroke="#9a9a9a" stroke-width="1.75"/></svg>
<div class="t" style="left:128.2px;top:760.88px;font-size:15.5px;line-height:15.5px;color:#000;font-weight:normal;letter-spacing:0.0px;">&lt;Action: Save&gt; (Save)</div>
<div class="t" style="left:1108.6px;top:760.88px;font-size:15.5px;line-height:15.5px;color:#000;font-weight:normal;letter-spacing:0.0px;">Once, for Last Detail Line</div>
<div style="position:absolute;left:563px;top:488.5px;width:39px;height:100px;border:2.4px solid #f1502d;border-radius:7px;box-sizing:border-box"></div>
<div style="position:absolute;left:562.5px;top:683.5px;width:39.5px;height:35.5px;border:2.2px solid #f1502d;border-radius:7px;box-sizing:border-box"></div>
<div style="position:absolute;left:541.4px;top:528.3px;width:20px;height:20px;background:#f1502d;border-radius:50%"></div>
<div style="position:absolute;left:541.2px;top:691.5px;width:20px;height:20px;background:#f1502d;border-radius:50%"></div>
<svg style="position:absolute;left:540px;top:527px;" width="24" height="24" viewBox="540 527 24 24" fill="none"><path d="M548.5,536.6 Q548.6,533.6 551.6,533.6 Q554.6,533.6 554.6,536.3 Q554.6,538.1 552.3,540.1 L548.6,543.2 H555.4" stroke="#fff" stroke-width="1.55" stroke-linejoin="round"/></svg>
<svg style="position:absolute;left:540px;top:690px;" width="24" height="24" viewBox="540 690 24 24" fill="none"><path d="M549.1,699.8 Q551.6,698.6 552.5,696.2 V707" stroke="#fff" stroke-width="1.8"/></svg>
<div id="frame"></div>
</body></html>
